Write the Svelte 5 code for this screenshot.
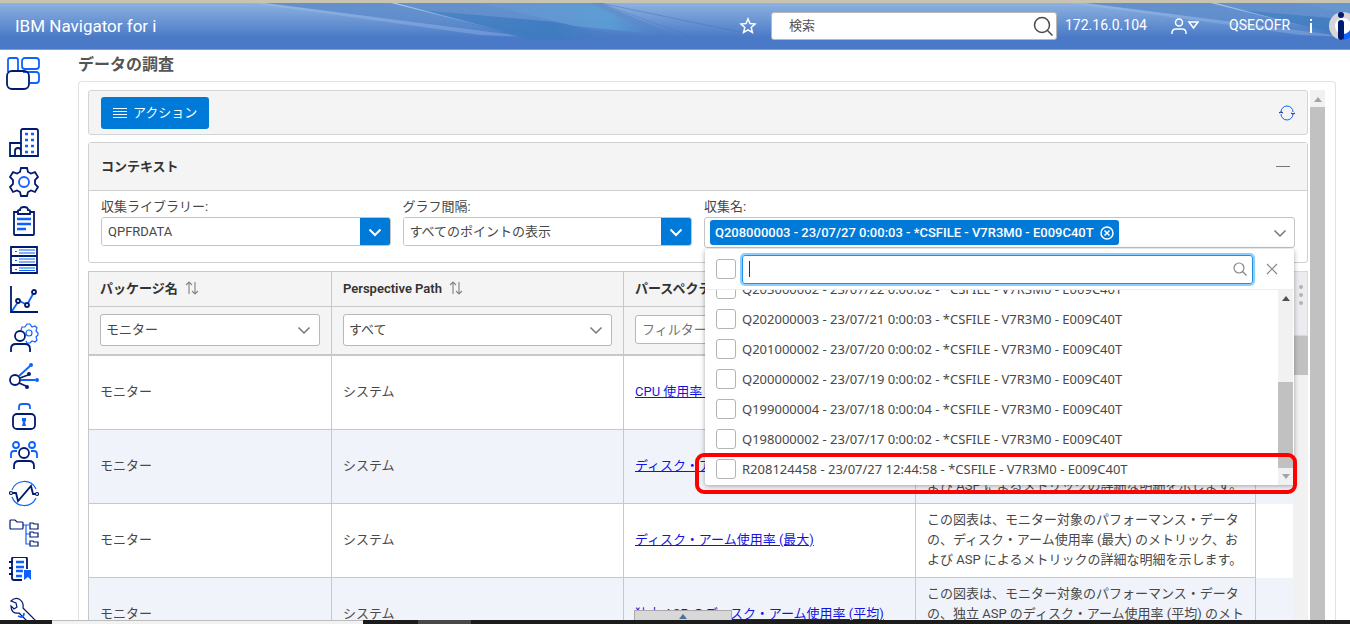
<script lang="ts">
    interface Row {
        packageName: string;
        path: string;
        perspective: string;
        description: string;
    }

    const rows: Row[] = [
        {
            packageName: "モニター",
            path: "システム",
            perspective: "CPU 使用率 (平均)",
            description: "この図表は、モニター対象のパフォーマンス・データの、CPU 使用率 (平均) のメトリックの詳細な明細を示します。"
        },
        {
            packageName: "モニター",
            path: "システム",
            perspective: "ディスク・アーム使用率 (平均)",
            description: "この図表は、モニター対象のパフォーマンス・データの、ディスク・アーム使用率 (平均) のメトリック、および ASP によるメトリックの詳細な明細を示します。"
        },
        {
            packageName: "モニター",
            path: "システム",
            perspective: "ディスク・アーム使用率 (最大)",
            description: "この図表は、モニター対象のパフォーマンス・データの、ディスク・アーム使用率 (最大) のメトリック、および ASP によるメトリックの詳細な明細を示します。"
        },
        {
            packageName: "モニター",
            path: "システム",
            perspective: "独立 ASP のディスク・アーム使用率 (平均)",
            description: "この図表は、モニター対象のパフォーマンス・データの、独立 ASP のディスク・アーム使用率 (平均) のメトリックの詳細な明細を示します。"
        }
    ];

    const collections = [
        "Q203000002 - 23/07/22 0:00:02 - *CSFILE - V7R3M0 - E009C40T",
        "Q202000003 - 23/07/21 0:00:03 - *CSFILE - V7R3M0 - E009C40T",
        "Q201000002 - 23/07/20 0:00:02 - *CSFILE - V7R3M0 - E009C40T",
        "Q200000002 - 23/07/19 0:00:02 - *CSFILE - V7R3M0 - E009C40T",
        "Q199000004 - 23/07/18 0:00:04 - *CSFILE - V7R3M0 - E009C40T",
        "Q198000002 - 23/07/17 0:00:02 - *CSFILE - V7R3M0 - E009C40T",
        "R208124458 - 23/07/27 12:44:58 - *CSFILE - V7R3M0 - E009C40T"
    ];

    let library = $state("QPFRDATA");
    let interval = $state("すべてのポイントの表示");
    let searchText = $state("");
    let collectionFilter = $state("");
    let checked = $state<string[]>([]);
</script>

{#snippet chevron()}
    <svg class="chevron" viewBox="0 0 14 14" aria-hidden="true"><path d="M1.500 4.500 7 10l5.500-5.500" /></svg>
{/snippet}

{#snippet sortIcon()}
    <svg class="sort-icon" viewBox="0 0 14 14" aria-hidden="true"><path d="M4 13V1M1 4l3-3 3 3M10 1v12M7 10l3 3 3-3" /></svg>
{/snippet}

<div class="app">
    <header class="topbar">
        <svg class="swoosh" width="1640" height="47" viewBox="0 0 1640 47" aria-hidden="true">
            <defs>
                <linearGradient id="fade" x1="0" y1="0" x2="0" y2="1">
                    <stop offset="0" stop-color="#4d80bf" stop-opacity=".65" />
                    <stop offset="1" stop-color="#4a7ac7" stop-opacity=".1" />
                </linearGradient>
                <linearGradient id="shade" x1="0" y1="0" x2="1" y2="0">
                    <stop offset="0" stop-color="#3c7bbf" stop-opacity=".5" />
                    <stop offset=".6" stop-color="#3c7bbf" stop-opacity=".9" />
                    <stop offset="1" stop-color="#4a7ac7" stop-opacity="0" />
                </linearGradient>
                <linearGradient id="glow" x1="0" y1="0" x2="1" y2="0">
                    <stop offset="0" stop-color="#6ea0d8" stop-opacity=".2" />
                    <stop offset=".75" stop-color="#5aa0d6" stop-opacity=".8" />
                    <stop offset="1" stop-color="#4f86cc" stop-opacity=".3" />
                </linearGradient>
                <linearGradient id="streak" x1="0" y1="0" x2="1" y2="1">
                    <stop offset="0" stop-color="#a9cdf0" />
                    <stop offset="1" stop-color="#a9cdf0" stop-opacity="0" />
                </linearGradient>
                <g id="wave">
                    <path d="M265 0H600L690 38H560Z" fill="url(#fade)" />
                    <path d="M265 0 530 34 480 32 250 0Z" fill="#a9c8ee" opacity=".3" />
                    <path d="M420 7 555 19 640 36 530 37Z" fill="url(#shade)" />
                    <path d="M480 0H590L655 31 575 23Z" fill="url(#glow)" />
                    <path d="M600 0 740 29" stroke="#4a78b8" opacity=".5" fill="none" />
                    <path d="M600 0 692 34" stroke="#4a78b8" opacity=".4" fill="none" />
                    <path d="M391 0 396 0 540 38Z" fill="url(#streak)" />
                </g>
            </defs>
            <use href="#wave" />
            <use href="#wave" x="820" />
        </svg>
        <span class="brand">IBM Navigator for i</span>
        <button class="icon-button star" aria-label="お気に入り">
            <svg width="18" height="18" viewBox="0 0 18 18"><path d="M9 2l2 4.600 5 .5-3.800 3.300 1.200 5L9 12.800l-4.400 2.600 1.200-5L2 7.100l5-.5z" /></svg>
        </button>
        <div class="search">
            <input type="text" aria-label="検索" placeholder="検索" bind:value={searchText} />
            <svg width="22" height="22" viewBox="0 0 22 22" aria-hidden="true"><circle cx="10" cy="10" r="7.500" /><path d="m15.500 15.500 5 5" /></svg>
        </div>
        <span class="host">172.16.0.104</span>
        <button class="icon-button user" aria-label="ユーザー">
            <svg width="28" height="18" viewBox="0 0 28 18"><circle cx="8" cy="5.500" r="3.500" /><path d="M1 17v-1q0-4 4-4h6q4 0 4 4v1M18 5h9l-4.500 6z" /></svg>
        </button>
        <span class="account">QSECOFR</span>
        <button class="icon-button" aria-label="情報">
            <svg width="6" height="18" viewBox="0 0 6 18"><path d="M3 2v2M3 6v10" stroke-width="2" /></svg>
        </button>
        <svg class="logo" width="30" height="30" viewBox="0 0 30 30" aria-hidden="true">
            <circle cx="15" cy="15" r="14" fill="#d5d5d8" />
            <path d="M15 29a14 14 0 0 0 14-14H15z" fill="#0f62fe" />
            <circle cx="15" cy="15" r="8" fill="#fff" />
            <path d="M13 12v14" stroke="#001a70" stroke-width="6" stroke-linecap="round" />
            <circle cx="13" cy="4" r="3" fill="#001a70" />
        </svg>
    </header>

    <div class="body">
        <nav class="sidebar">
            <a href="#dashboard" class="home" aria-label="ダッシュボード">
                <svg viewBox="0 0 34 34">
                    <g class="light"><path d="M2 16V4q0-2 2-2h6q2 0 2 2v11" /><rect x="16" y="2" width="17" height="11" rx="3" /><path d="M17 16h13q3 0 3 3v5q0 3-3 3h-6" /></g>
                    <rect class="dark" x="1" y="15" width="22" height="18" rx="5" />
                </svg>
            </a>
            <a href="#system" aria-label="システム">
                <svg viewBox="0 0 30 30">
                    <path class="dark" d="M1 28V15h11V3q0-2 2-2h13q2 0 2 2v25zM6 28v-5q0-3 3-3t3 3v5M12 14v14" />
                    <path class="dots" d="M16 6h3M22 6h3M16 12h3M22 12h3M16 18h3M22 18h3M16 24h3M22 24h3" />
                </svg>
            </a>
            <a href="#settings" aria-label="設定">
                <svg viewBox="0 0 30 30">
                    <path class="dark" d="M12 1h6l1 4 3 1.500 4-1.500 3 5-3 3v4l3 3-3 5-4-1.500-3 1.500-1 4h-6l-1-4-3-1.500L4 25l-3-5 3-3v-4l-3-3 3-5 4 1.500L11 5z" />
                    <circle class="light" cx="15" cy="15" r="5" />
                </svg>
            </a>
            <a href="#tasks" aria-label="タスク">
                <svg viewBox="0 0 30 30">
                    <path class="dark" d="M9 6H5v22q0 1 1 1h18q1 0 1-1V6h-4M9 8V5q0-1 2-1 0-3 4-3t4 3q2 0 2 1v3z" />
                    <path class="dots" d="M8 13h14M8 18h14M8 23h9" />
                </svg>
            </a>
            <a href="#servers" aria-label="サーバー">
                <svg viewBox="0 0 30 30">
                    <path class="dark" d="M2 2h26v26H2zM2 11h26M2 20h26" />
                    <path class="light thin" d="M6 6.500h2M10 5h16M10 8h16M6 15.500h2M10 14h16M10 17h16M6 24.500h2M10 23h16M10 25.500h16" />
                </svg>
            </a>
            <a href="#performance" aria-label="パフォーマンス">
                <svg viewBox="0 0 30 30">
                    <path class="light" d="m3 27 6-9M11 17l5 3M19 19l5-9" />
                    <path class="dark" d="M2 2v26h27" />
                    <g class="dark"><circle cx="9" cy="17" r="2" /><circle cx="18" cy="21" r="2" /><circle cx="25" cy="8" r="2" /></g>
                </svg>
            </a>
            <a href="#user-settings" aria-label="ユーザー設定">
                <svg viewBox="0 0 30 30">
                    <path class="light thin" d="M12 7l1-3 3 0 2-3h3l2 3 3-1 2 2-1 3 2 2v2l-2 2 1 3-2 2-3-1-2 2h-3l-1-2" />
                    <circle class="light thin" cx="20" cy="10" r="3" />
                    <circle class="dark" cx="11" cy="13" r="5" />
                    <path class="dark" d="M2 29v-3q0-5 5-5h9q5 0 5 5v3" />
                </svg>
            </a>
            <a href="#network" aria-label="ネットワーク">
                <svg viewBox="0 0 30 30">
                    <path class="light" d="M10 14 21 4M12 18h14" />
                    <path class="dark" d="m11 16 8-3M10 21l7 3" />
                    <circle class="dark" cx="6" cy="18" r="5" />
                    <g fill="#0f62fe"><circle cx="22" cy="3" r="2" /><circle cx="28" cy="18" r="2" /></g>
                    <g fill="#001a70"><circle cx="20" cy="12" r="2" /><circle cx="18" cy="25" r="2" /></g>
                </svg>
            </a>
            <a href="#security" aria-label="セキュリティー">
                <svg viewBox="0 0 30 30">
                    <path class="light" d="M10 9V6q0-3 3-3h5q3 0 3 3v2" />
                    <rect class="dark" x="4" y="13" width="22" height="15" rx="4" />
                    <path d="M13 17h4v3l-1 1 1 4h-4l1-4-1-1z" fill="#0f62fe" />
                </svg>
            </a>
            <a href="#users" aria-label="ユーザーとグループ">
                <svg viewBox="0 0 30 30">
                    <g class="light"><circle cx="7" cy="5" r="3" /><circle cx="23" cy="5" r="3" /><path d="M2 18v-4q0-3 3-3h3M28 18v-4q0-3-3-3h-3" /></g>
                    <circle class="dark" cx="15" cy="13" r="5" />
                    <path class="dark" d="M5 29v-3q0-5 5-5h10q5 0 5 5v3" />
                </svg>
            </a>
            <a href="#monitors" aria-label="モニター">
                <svg viewBox="0 0 30 30">
                    <path class="light thin" d="M3 11a13 13 0 0 1 24-1M27 19a13 13 0 0 1-24-1" />
                    <path class="dark" d="M4 14h3l2 8L22 7l2 8h2" />
                    <circle class="dark thin" cx="2" cy="14" r="1.500" /><circle class="dark thin" cx="28" cy="15" r="1.500" />
                </svg>
            </a>
            <a href="#files" aria-label="ファイル・システム">
                <svg viewBox="0 0 30 30">
                    <path class="light thin" d="M14 7h6M17 7v19h4M17 16h4" />
                    <path class="dark thin" d="M1 10V3q0-1 1-1h4l2 2h5q1 0 1 1v5q0 1-1 1H2q-1 0-1-1z" />
                    <path class="dark thin" d="M21 5h3l1 1h4v5h-8zM21 14h3l1 1h4v4h-8zM21 23h3l1 1h4v4h-8z" />
                </svg>
            </a>
            <a href="#journal" aria-label="ジャーナル">
                <svg viewBox="0 0 30 30">
                    <path class="dark" d="M13 23H5q-2 0-2-2V2q0-2 2-2h11q2 0 2 2v10M0 5h4M0 11h4M0 17h4" />
                    <path class="dots" d="M7 5h8M7 10h8M7 14h7M7 19h6" />
                    <path d="M15 13h7v10l-3-3-4 3z" fill="#0f62fe" />
                </svg>
            </a>
            <a href="#service" aria-label="保守ツール">
                <svg viewBox="0 0 30 30">
                    <path class="dark thin" d="M10 3q-4-2-8 2l5 2 1 4-3 2-3-3q0 8 8 7l11 11q3 2 5-1 1-3-1-4L14 12q1-6-4-9" />
                    <path class="light" d="M9 20q6 3 6-3" />
                </svg>
            </a>
        </nav>

        <main class="main">
            <h1>データの調査</h1>
            <div class="panel">
                <div class="content">
                    <div class="toolbar">
                        <button class="action-button">
                            <svg width="14" height="12" viewBox="0 0 14 12" aria-hidden="true"><path d="M0 1.500h14M0 4.500h14M0 7.500h14M0 10.500h14" /></svg>
                            アクション
                        </button>
                        <button class="icon-button" aria-label="最新表示">
                            <svg class="refresh" width="16" height="16" viewBox="0 0 16 16"><path d="M2 7a6 6 0 0 1 12 0M14 9A6 6 0 0 1 2 9" /><path class="tips" d="m0 8 2-1 2 1M12 8l2 1 2-1" /></svg>
                        </button>
                    </div>

                    <section class="context">
                        <div class="context-header">
                            <h2>コンテキスト</h2>
                            <button class="icon-button" aria-label="折りたたむ">
                                <svg class="minus" width="14" height="14" viewBox="0 0 14 14"><path d="M0 6.500h14" /></svg>
                            </button>
                        </div>
                        <div class="fields">
                            <div class="field">
                                <label for="library">収集ライブラリー:</label>
                                <div class="combo">
                                    <input id="library" type="text" bind:value={library} />
                                    <button aria-label="ライブラリーの選択">{@render chevron()}</button>
                                </div>
                            </div>
                            <div class="field">
                                <label for="interval">グラフ間隔:</label>
                                <div class="combo">
                                    <input id="interval" type="text" bind:value={interval} />
                                    <button aria-label="間隔の選択">{@render chevron()}</button>
                                </div>
                            </div>
                            <div class="field wide">
                                <span class="label">収集名:</span>
                                <div class="multiselect">
                                    <span class="chip">
                                        Q208000003 - 23/07/27 0:00:03 - *CSFILE - V7R3M0 - E009C40T
                                        <button aria-label="除去">
                                            <svg width="14" height="14" viewBox="0 0 14 14"><circle cx="7" cy="7" r="6" /><path d="m4.500 4.500 5 5m0-5-5 5" /></svg>
                                        </button>
                                    </span>
                                    <button class="icon-button" aria-label="収集名の選択">{@render chevron()}</button>
                                </div>
                                <div class="dropdown">
                                    <div class="dropdown-header">
                                        <input type="checkbox" aria-label="すべて選択" />
                                        <div class="filter-box">
                                            <span class="caret"></span>
                                            <input type="text" aria-label="収集名のフィルター" bind:value={collectionFilter} />
                                            <svg width="14" height="14" viewBox="0 0 14 14" aria-hidden="true"><circle cx="6" cy="6" r="5" /><path d="m9.500 9.500 4 4" /></svg>
                                        </div>
                                        <button class="icon-button" aria-label="閉じる">
                                            <svg class="close" width="12" height="12" viewBox="0 0 12 12"><path d="m1 1 10 10M11 1 1 11" /></svg>
                                        </button>
                                    </div>
                                    <div class="options">
                                        <div class="option-list">
                                            {#each collections as name}
                                                <label class="option">
                                                    <input type="checkbox" value={name} bind:group={checked} />
                                                    {name}
                                                </label>
                                            {/each}
                                        </div>
                                        <div class="scrollbar list-scroll">
                                            <span class="arrow up dark-arrow"></span>
                                            <span class="thumb"></span>
                                            <span class="arrow down"></span>
                                        </div>
                                    </div>
                                    <div class="highlight"></div>
                                </div>
                            </div>
                        </div>
                    </section>

                    <div class="table-area">
                        <table>
                            <colgroup>
                                <col class="col-package" />
                                <col class="col-path" />
                                <col class="col-path" />
                                <col class="col-description" />
                                <col />
                            </colgroup>
                            <thead>
                                <tr class="titles">
                                    <th>パッケージ名 {@render sortIcon()}</th>
                                    <th>Perspective Path {@render sortIcon()}</th>
                                    <th>パースペクティブ {@render sortIcon()}</th>
                                    <th>説明 {@render sortIcon()}</th>
                                    <td></td>
                                </tr>
                                <tr class="filters">
                                    <td>
                                        <div class="select">
                                            <select aria-label="パッケージ名"><option>モニター</option></select>
                                            {@render chevron()}
                                        </div>
                                    </td>
                                    <td>
                                        <div class="select">
                                            <select aria-label="Perspective Path"><option>すべて</option></select>
                                            {@render chevron()}
                                        </div>
                                    </td>
                                    <td><input class="filter" type="text" aria-label="パースペクティブ" placeholder="フィルター" /></td>
                                    <td><input class="filter" type="text" aria-label="説明" placeholder="フィルター" /></td>
                                    <td></td>
                                </tr>
                            </thead>
                            <tbody>
                                {#each rows as row}
                                    <tr>
                                        <td>{row.packageName}</td>
                                        <td>{row.path}</td>
                                        <td><a href="#perspective">{row.perspective}</a></td>
                                        <td>{row.description}</td>
                                        <td></td>
                                    </tr>
                                {/each}
                            </tbody>
                        </table>
                        <div class="table-side">
                            <button class="column-menu" aria-label="列の選択">
                                <span></span><span></span><span></span>
                            </button>
                            <div class="scrollbar table-scroll"><span class="thumb"></span></div>
                        </div>
                    </div>
                </div>
                <div class="scrollbar page-scroll">
                    <span class="arrow up"></span>
                    <span class="thumb"></span>
                </div>
            </div>
            <button class="drawer" aria-label="開く"><span class="arrow up"></span></button>
        </main>
    </div>

    <footer class="taskbar">
        <span class="start"></span>
        <span class="find"></span>
        <span class="gap"></span>
        <span class="task"></span>
    </footer>
</div>

<style>
    :global(body) {
        margin: 0;
        background: #fff;
    }

    .app {
        height: 100vh;
        display: flex;
        flex-direction: column;
        overflow: hidden;
        font-family: Roboto, "Noto Sans CJK JP", sans-serif;
        font-size: 13px;
        line-height: 20px;
        color: #484848;
    }

    .app * {
        box-sizing: border-box;
    }

    button,
    input,
    select {
        font: inherit;
        color: inherit;
        margin: 0;
    }

    button {
        cursor: pointer;
    }

    svg {
        fill: none;
        flex: none;
    }

    .icon-button {
        display: flex;
        padding: 0;
        border: none;
        background: none;
    }

    /* top bar */
    .topbar {
        position: relative;
        flex: none;
        display: flex;
        align-items: center;
        height: 50px;
        padding-left: 15px;
        border-top: 3px solid #c9c4b1;
        border-bottom: 1px solid #7d9fd8;
        background: linear-gradient(#8db1e0, #4a7ac7 75%);
        color: #fff;
        overflow: hidden;
    }

    .swoosh {
        position: absolute;
        top: 0;
        left: 0;
    }

    .topbar > :not(.swoosh) {
        z-index: 1;
    }

    .brand {
        font-size: 17px;
        margin-right: auto;
    }

    .topbar .icon-button svg {
        stroke: #fff;
        stroke-width: 1.5;
    }

    .star {
        margin-right: 14px;
    }

    .search {
        display: flex;
        align-items: center;
        width: 286px;
        height: 28px;
        padding: 0 2px 0 17px;
        margin-right: 8px;
        background: #fff;
        border: 1px solid #b8b8b8;
        border-radius: 3px;
    }

    .search input {
        flex: 1;
        min-width: 0;
        padding: 0;
        border: none;
        outline: none;
        color: #555;
    }

    .search input::placeholder {
        color: #555;
    }

    .search svg {
        stroke: #4a4a4a;
        stroke-width: 1.5;
    }

    .host,
    .account {
        font-size: 14px;
        padding-bottom: 3px;
    }

    .host {
        width: 86px;
        margin-right: 20px;
    }

    .user {
        margin-right: 30px;
    }

    .account {
        width: 60px;
        margin-right: 19px;
    }

    .logo {
        margin-left: 14px;
        margin-right: -8px;
    }

    /* sidebar */
    .body {
        flex: 1;
        min-height: 0;
        display: flex;
        overflow: hidden;
    }

    .sidebar {
        flex: none;
        width: 78px;
        padding: 6px 0 0 9px;
        overflow: hidden;
    }

    .sidebar a {
        display: block;
        height: 39px;
    }

    .sidebar svg {
        width: 30px;
        height: 30px;
    }

    .sidebar .home {
        height: 72px;
        margin-left: -3px;
    }

    .home svg {
        width: 34px;
        height: 34px;
    }

    .dark {
        stroke: #001a70;
        stroke-width: 1.8;
    }

    .light {
        stroke: #0f62fe;
        stroke-width: 1.8;
    }

    .thin {
        stroke-width: 1.2;
    }

    .dots {
        stroke: #0f62fe;
        stroke-width: 2.3;
    }

    /* main panel */
    .main {
        position: relative;
        flex: 1;
        min-width: 0;
        display: flex;
        flex-direction: column;
        padding-right: 14px;
    }

    h1 {
        flex: none;
        height: 31px;
        margin: 0;
        font-size: 16px;
        line-height: 30px;
        font-weight: 600;
        color: #555;
    }

    .panel {
        flex: 1;
        min-height: 0;
        display: flex;
        gap: 2px;
        padding: 8px 10px 0 9px;
        border: 1px solid #e2e2e2;
        border-bottom: none;
        border-radius: 4px 4px 0 0;
    }

    .content {
        flex: 1;
        min-width: 0;
        overflow: hidden;
    }

    .toolbar {
        display: flex;
        align-items: center;
        justify-content: space-between;
        height: 45px;
        padding: 0 12px;
        background: #f4f4f4;
        border: 1px solid #d4d4d4;
        border-radius: 3px;
    }

    .action-button {
        display: flex;
        align-items: center;
        gap: 6px;
        height: 32px;
        padding: 0 12px;
        border: none;
        border-radius: 3px;
        background: #007ad9;
        color: #fff;
    }

    .action-button svg {
        stroke: #fff;
    }

    .refresh {
        stroke: #0f62fe;
    }

    .tips {
        stroke: #001a70;
    }

    .context {
        margin-top: 7px;
        border: 1px solid #d0d0d0;
        border-radius: 3px;
    }

    .context-header {
        display: flex;
        align-items: center;
        justify-content: space-between;
        height: 48px;
        padding: 0 17px 0 12px;
        background: #f4f4f4;
        border-bottom: 1px solid #d0d0d0;
    }

    h2 {
        margin: 0;
        font-size: 13px;
        font-weight: 600;
        color: #333;
    }

    .minus {
        stroke: #777;
    }

    .fields {
        display: grid;
        grid-template-columns: repeat(4, 1fr);
        gap: 12px;
        padding: 6px 12px 14px;
    }

    .field {
        position: relative;
        min-width: 0;
    }

    .wide {
        grid-column: span 2;
    }

    .field > label,
    .label {
        display: block;
        height: 20px;
    }

    .combo {
        display: flex;
        height: 29px;
        border: 1px solid #c4c4c4;
        border-radius: 3px;
        overflow: hidden;
    }

    .combo input {
        flex: 1;
        min-width: 0;
        padding: 0 6px;
        border: none;
        outline: none;
    }

    .combo button {
        width: 30px;
        padding: 0;
        border: none;
        background: #007ad9;
    }

    .chevron {
        width: 14px;
        height: 14px;
        stroke: #777;
        stroke-width: 1.5;
        vertical-align: middle;
    }

    .combo .chevron {
        stroke: #fff;
        stroke-width: 2;
    }

    .multiselect {
        display: flex;
        align-items: center;
        justify-content: space-between;
        height: 31px;
        padding: 0 7px 0 5px;
        border: 1px solid #c4c4c4;
        border-radius: 3px;
    }

    .chip {
        display: flex;
        align-items: center;
        gap: 6px;
        height: 25px;
        padding: 0 5px;
        border-radius: 3px;
        background: #007ad9;
        color: #fff;
        font-weight: 500;
        white-space: nowrap;
    }

    .chip button {
        display: flex;
        padding: 0;
        border: none;
        background: none;
    }

    .chip svg {
        stroke: #fff;
        stroke-width: 1.5;
    }

    /* dropdown of collections */
    .dropdown {
        position: absolute;
        z-index: 10;
        top: 52px;
        left: 1px;
        right: 1px;
        background: #fff;
        border-radius: 3px;
        box-shadow: 0 1px 5px rgba(0, 0, 0, 0.35);
        font-family: "Noto Sans", "Noto Sans CJK JP", sans-serif;
    }

    .dropdown-header {
        display: flex;
        align-items: center;
        gap: 6px;
        height: 41px;
        padding: 0 16px 0 11px;
        border-bottom: 1px solid #eee;
    }

    .dropdown-header .icon-button {
        margin-left: 7px;
    }

    input[type="checkbox"] {
        appearance: none;
        flex: none;
        width: 20px;
        height: 20px;
        border: 1px solid #b4b4b4;
        border-radius: 3px;
        background: #fff;
    }

    input[type="checkbox"]:checked {
        background: #007ad9;
    }

    .filter-box {
        flex: 1;
        display: flex;
        align-items: center;
        height: 29px;
        padding: 0 5px 0 6px;
        border: 1px solid #2090e8;
        border-radius: 3px;
        box-shadow: 0 0 0 2px #8dcdff;
    }

    .caret {
        width: 1px;
        height: 16px;
        background: #333;
    }

    .filter-box input {
        flex: 1;
        min-width: 0;
        padding: 0;
        border: none;
        outline: none;
        background: none;
    }

    .filter-box svg,
    .close {
        stroke: #888;
        stroke-width: 1.2;
    }

    .options {
        display: flex;
        height: 195px;
        padding-right: 1px;
    }

    .option-list {
        flex: 1;
        display: flex;
        flex-direction: column;
        justify-content: flex-end;
        padding-bottom: 1px;
        overflow: hidden;
    }

    .option {
        flex: none;
        display: flex;
        align-items: center;
        gap: 6px;
        height: 30px;
        padding-left: 11px;
        white-space: nowrap;
    }

    .highlight {
        position: absolute;
        left: -10px;
        right: -3px;
        bottom: -9px;
        height: 41px;
        border: 4px solid #f00;
        border-radius: 9px;
        pointer-events: none;
    }

    /* scrollbars */
    .scrollbar {
        flex: none;
        display: flex;
        flex-direction: column;
        align-items: center;
        width: 15px;
        background: #f1f1f1;
    }

    .arrow {
        flex: none;
        width: 0;
        height: 0;
        border: 4px solid transparent;
    }

    .up {
        border-top: none;
        border-bottom: 5px solid #a3a3a3;
    }

    .down {
        border-bottom: none;
        border-top: 5px solid #a3a3a3;
    }

    .dark-arrow {
        border-bottom-color: #505050;
    }

    .thumb {
        width: 100%;
        background: #c1c1c1;
    }

    .list-scroll {
        padding: 6px 0;
    }

    .list-scroll .thumb {
        height: 86px;
        margin: auto 0 6px;
    }

    .page-scroll {
        padding-top: 7px;
    }

    .page-scroll .thumb {
        flex: 1;
        margin-top: 5px;
    }

    /* table */
    .table-area {
        display: flex;
        margin-top: 8px;
        border-left: 1px solid #c8c8c8;
    }

    table {
        flex: 1;
        width: 100%;
        min-width: 0;
        table-layout: fixed;
        border-spacing: 0;
        border-top: 1px solid #c8c8c8;
    }

    .col-package {
        width: 243px;
    }

    .col-path {
        width: 292px;
    }

    .col-description {
        width: 340px;
    }

    th,
    td {
        padding: 0 11px;
        text-align: left;
        border-right: 1px solid #c8c8c8;
        border-bottom: 1px solid #c8c8c8;
    }

    td:last-child {
        padding: 0;
        border: none;
    }

    th {
        font-weight: 600;
        color: #333;
    }

    .titles {
        height: 35px;
        background: #f4f4f4;
    }

    .filters {
        height: 49px;
        background: #f4f4f4;
    }

    .filters td {
        padding-bottom: 2px;
        border-bottom-width: 2px;
    }

    tbody tr {
        height: 74px;
    }

    tbody td {
        padding-bottom: 2px;
    }

    tbody tr:nth-child(even) {
        background: #f0f4fa;
    }

    tbody a {
        color: #1414e0;
    }

    .sort-icon {
        width: 14px;
        height: 14px;
        margin-left: 4px;
        stroke: #888;
        stroke-width: 1.2;
        vertical-align: -2px;
    }

    .select {
        display: flex;
        align-items: center;
        height: 32px;
        padding-right: 8px;
        background: #fff;
        border: 1px solid #b8b8b8;
        border-radius: 3px;
    }

    .select select {
        appearance: none;
        flex: 1;
        padding: 0 5px;
        border: none;
        outline: none;
        background: none;
    }

    .filter {
        width: 100%;
        height: 29px;
        padding: 0 6px;
        border: 1px solid #b8b8b8;
        border-radius: 3px;
    }

    .table-side {
        flex: none;
        display: flex;
        flex-direction: column;
        width: 15px;
    }

    .column-menu {
        flex: none;
        display: flex;
        flex-direction: column;
        align-items: center;
        gap: 4px;
        height: 65px;
        padding: 13px 0;
        border: 1px solid #d8d8dc;
        background: #ebebf0;
    }

    .column-menu span {
        width: 4px;
        height: 4px;
        border-radius: 50%;
        background: #b4b4b4;
    }

    .table-scroll {
        flex: 1;
    }

    .table-scroll .thumb {
        height: 39px;
    }

    .drawer {
        position: absolute;
        left: 556px;
        bottom: 0;
        display: flex;
        justify-content: center;
        width: 98px;
        height: 10px;
        padding: 3px 0 0;
        border: 1px solid #aaa;
        border-bottom: none;
        background: #d8d8d8;
    }

    .drawer .arrow {
        border-bottom-color: #4a7396;
    }

    /* taskbar */
    .taskbar {
        flex: none;
        display: flex;
        height: 4px;
        background: #1c1c1c;
    }

    .start {
        width: 52px;
    }

    .find {
        width: 311px;
        background: #f2f2f2;
        border-top: 1px solid #bbb;
    }

    .gap {
        width: 55px;
    }

    .task {
        width: 53px;
        background: #484848;
    }
</style>
